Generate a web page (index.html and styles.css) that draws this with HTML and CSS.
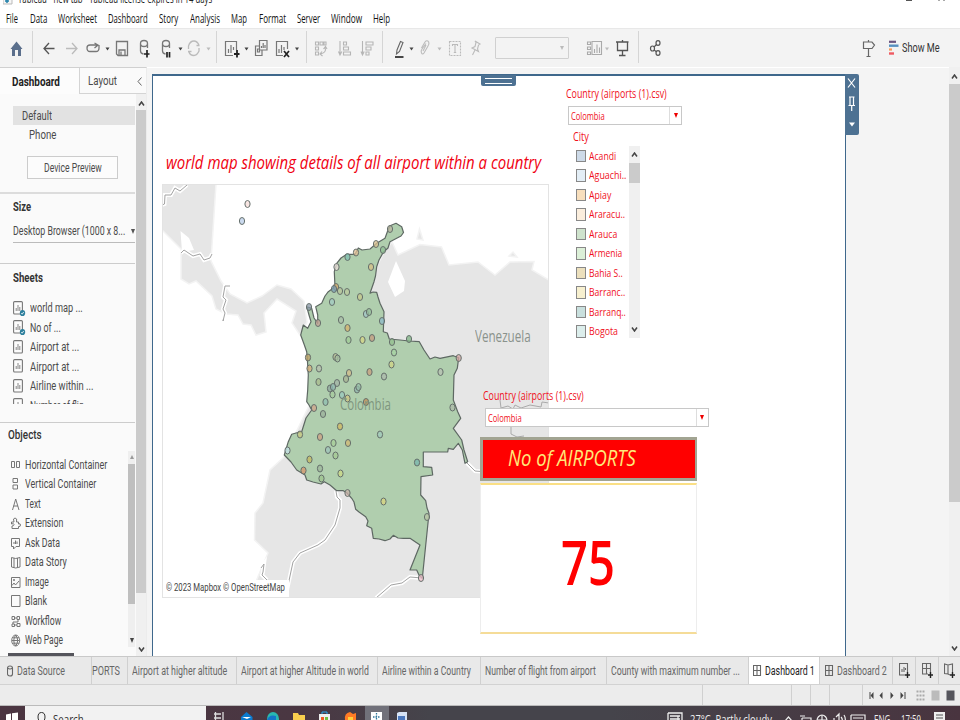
FILE: index.html
```html
<!DOCTYPE html>
<html lang="en">
<head>
<meta charset="utf-8">
<title>Tableau - new tab</title>
<link rel="stylesheet" href="styles.css">
</head>
<body>
<div class="app">
  <header class="titlebar">
    <div class="title-left"><svg class="logo" width="10" height="5" viewBox="0 0 10 5"><path d="M0 0V4H9V0" fill="#f6f6f6" stroke="#bbb"/><path d="M4 0v3M2 1h4" stroke="#1f7fa8" stroke-width="1.4"/></svg><span class="fit title-text" data-w="194">Tableau - new tab - Tableau license expires in 14 days</span></div>
    <svg class="winbtns" width="50" height="3" viewBox="0 0 50 3"><path d="M0 .5h6M33 0v1M38 0v1" stroke="#555"/></svg>
  </header>
  <nav class="menubar">
    <span class="m m1"><span class="fit" data-w="12">File</span></span><span class="m m2"><span class="fit" data-w="17">Data</span></span><span class="m m3"><span class="fit" data-w="39">Worksheet</span></span><span class="m m4"><span class="fit" data-w="40">Dashboard</span></span><span class="m m5"><span class="fit" data-w="19">Story</span></span><span class="m m6"><span class="fit" data-w="30">Analysis</span></span><span class="m m7"><span class="fit" data-w="16">Map</span></span><span class="m m8"><span class="fit" data-w="27">Format</span></span><span class="m m9"><span class="fit" data-w="23">Server</span></span><span class="m m10"><span class="fit" data-w="31">Window</span></span><span class="m"><span class="fit" data-w="17">Help</span></span>
  </nav>
  <div class="toolbar">
    <svg class="sec" width="33" height="39" viewBox="0 28 33 39"><path d="M10.500 49L16.500 41.500L22.500 49H21V56H18V50H15V56H12V49Z" fill="#5b6f8c"/></svg>
    <svg class="sec" width="184" height="39" viewBox="33 28 184 39"><g fill="none" stroke="#555" stroke-width="1.300">
      <path d="M54.500 48.500H44M49 43L44 48.500L49 54"/><path d="M66 48.500H77M72 43L77 48.500L72 54" stroke="#bbb"/>
      <path d="M97 45H90Q87 45 87 48Q87 51.500 90 51.500H96Q99 51.500 99 48V45M94.500 43L98 45L94.500 48" stroke="#777"/>
      <path d="M116.500 41.500H127.500V55.500H118L116.500 54ZM119 55V50H125V55M121 51.500V55" stroke="#777"/>
      <g stroke="#777"><path id="cyl" d="M140.500 43.500Q140.500 40.500 144 40.500T147.500 43.500V48M140.500 43.500Q140.500 46.500 144 46.500T147.500 43.500M140.500 43.500V51Q140.500 53.500 143.500 54"/><use href="#cyl" x="22"/></g>
      <path d="M144 54H149.500M147 50V57.500M167 52V57.500M169.500 52V57.500" stroke="#222" stroke-width="1.700"/>
      <path d="M188.500 49V46Q190 41 194 41Q197 41 199 45M196.500 45.500H199.500M199 48V51Q197 55.500 194 55.500Q190 55.500 189 52M191.500 51.500H188" stroke="#bbb"/></g>
      <path d="M105.500 47.500h4l-2 3zM178.500 47.500h4l-2 3z" fill="#444"/><path d="M206.500 47.500h4l-2 3z" fill="#bbb"/></svg>
    <svg class="sec" width="90" height="39" viewBox="217 28 90 39"><g fill="none" stroke="#777" stroke-width="1.200">
      <path d="M233 55.500H225.500V41.500H236.500V50M228.500 53V49M231 53V45M233.500 50V47"/><path d="M234 54H239.500M237 50V57.500" stroke="#222" stroke-width="1.800"/>
      <path d="M259.500 40.500H267V50H259.500ZM261.500 48V46M263.200 48V43M265 48V45M259 46H255.500V55.500H262V50.500M257.500 49h2v3h-2z"/>
      <path d="M283 55.500H276.500V41.500H287.500V49M279 53V49M281.500 53V45M284 50V47"/><path d="M284 51L289 57M289 51L284 57" stroke="#222" stroke-width="1.700"/></g><path d="M244.500 47.500h4l-2 3zM295 47.500h4l-2 3z" fill="#444"/></svg>
    <svg class="sec" width="76" height="39" viewBox="307 28 76 39"><g fill="none" stroke="#b5b5b5" stroke-width="1.100"><path d="M315.500 42h3v3h-3zM320 42h3v3h-3zM324 42h2v3h-2zM315.500 47h3v3h-3zM315.500 52h3v3h-3zM325 47Q327 53 320 54M322 51.500L320 54L322.500 56M323.500 49L325.500 46.500L327 49"/><path d="M340 41V54M338.500 51.500L340 55L341.800 51.500M343.500 42h3v3h-3zM343.500 47h5v3h-5zM343.500 52h7v3h-7z"/><path d="M362.500 41V54M361 51.500L362.500 55L364.200 51.500M366 42h7v3h-7zM366 47h5v3h-5zM366 52h3v3h-3z"/></g></svg>
    <svg class="sec sec-pen" width="112" height="39" viewBox="383 28 112 39"><g fill="none" stroke="#bbb" stroke-width="1.100"><path d="M397 50L400.500 41.500L403 42.500L399.500 51.500L396.500 54Z" stroke="#666"/><path d="M395 57H403.500" stroke="#333" stroke-width="1.800"/><path d="M421.500 48L425 42Q427 39.500 428.700 42Q429.500 44 428 46L424 53Q422.500 55 421.500 53Q420.500 51 422 49L426 43.500M426 45L423 51"/><path d="M449.500 41.500H460.500V55.500H449.500Z" stroke-dasharray="2 1"/><path d="M452.500 46V44.500H457.500V46M455 44.500V52.500M453.800 52.500H456.200"/><path d="M475 41L480 44L478.500 45L477.500 49L478.500 51.500L472 48L475 46.500L476 42.500ZM475 50L472.500 55"/></g><path d="M409.500 47.500h4l-2 3z" fill="#444"/><path d="M437.500 47.500h4l-2 3z" fill="#bbb"/></svg>
    <div class="combo"><i class="caret"></i></div>
    <svg class="sec" width="61" height="39" viewBox="578 28 61 39"><g fill="none" stroke="#aaa" stroke-width="1.100"><path d="M592 41.500H601.500V54.500H592ZM594.500 53V49M597 53V44.500M599.500 53V47.500M587.500 42h3v2.500h-3zM587.500 47h3v2.500h-3zM587.500 52h3v2.500h-3z"/><path d="M616 42H628.500M617.500 42V50.500H627.500V42M622.500 40V42M622.500 50.500V55.500M619 55.500H625.500" stroke="#555" stroke-width="1.300"/></g><path d="M605 47.500h4l-2 3z" fill="#bbb"/></svg>
    <svg class="sec last" width="30" height="39" viewBox="639 28 30 39"><g fill="none" stroke="#555" stroke-width="1.200"><ellipse cx="652.500" cy="48.500" rx="2" ry="2.500"/><ellipse cx="658" cy="43" rx="2" ry="2.300"/><ellipse cx="658" cy="53" rx="2" ry="2.300"/><path d="M654 47L656.500 44.500M654 50L656.500 51.800"/></g></svg>
    <div class="showme"><svg width="40" height="20" viewBox="858 38 40 20"><path d="M862.500 42H871L873.500 45L871 48.500H862.500ZM867.500 40V42M867.500 48.500V56.500M865.500 56.500H869.500" fill="none" stroke="#666" stroke-width="1.200"/><path d="M888 41.800H895" stroke="#6b5580" stroke-width="2.200"/><path d="M888 45.700H897.500" stroke="#5790c0" stroke-width="2.400"/><path d="M888 49.500H891" stroke="#f59a5a" stroke-width="2.200"/><path d="M888 53.500H893" stroke="#ee5a62" stroke-width="2.400"/></svg><span class="fit" data-w="38">Show Me</span></div>
  </div>

  <main class="main">
    <aside class="side">
      <div class="side-tabs"><div class="stab on"><span class="fit" data-w="48">Dashboard</span></div><div class="stab"><span class="fit" data-w="29">Layout</span><svg width="5" height="9" viewBox="0 0 5 9"><path d="M4.500 .5L1 4.500L4.500 8.500" fill="none" stroke="#666"/></svg></div></div>
      <div class="side-body">
        <div class="side-content">
          <section class="devices">
            <div class="dev sel"><span class="fit" data-w="30">Default</span></div>
            <div class="dev ph"><span class="fit" data-w="27">Phone</span></div>
            <div class="btn"><span class="fit" data-w="58">Device Preview</span></div>
          </section>
          <section class="size"><h3><span class="fit" data-w="18">Size</span></h3><div class="select"><span class="fit" data-w="112">Desktop Browser (1000 x 8...</span><i class="caret"></i></div></section>
          <section class="sheets"><h3><span class="fit" data-w="30">Sheets</span></h3>
            <svg class="defs" width="0" height="0"><defs><g id="sheet"><rect x=".6" y=".6" width="8.800" height="12.400" rx="1" fill="#fcfcfc" stroke="#777" stroke-width="1.100"/><path d="M3.200 10V7M5 10V4M6.800 10V6" stroke="#888" stroke-width="1"/></g><g id="used"><use href="#sheet"/><ellipse cx="9.500" cy="12" rx="2.700" ry="3.100" fill="#2d7f9d"/><path d="M8.300 12L9.200 13.200L10.700 11" stroke="#fff" fill="none" stroke-width=".8"/></g></defs></svg>
            <ul>
              <li><svg width="14" height="16"><use href="#used"/></svg><span class="fit" data-w="53">world map ...</span></li>
              <li><svg width="14" height="16"><use href="#used"/></svg><span class="fit" data-w="31">No of ...</span></li>
              <li><svg width="14" height="16"><use href="#sheet"/></svg><span class="fit" data-w="49">Airport at ...</span></li>
              <li><svg width="14" height="16"><use href="#sheet"/></svg><span class="fit" data-w="49">Airport at ...</span></li>
              <li><svg width="14" height="16"><use href="#sheet"/></svg><span class="fit" data-w="63">Airline within ...</span></li>
              <li><svg width="14" height="16"><use href="#sheet"/></svg><span class="fit" data-w="60">Number of flig...</span></li>
            </ul></section>
          <section class="objects"><h3><span class="fit" data-w="34">Objects</span></h3>
            <div class="obj-wrap"><ul>
              <li><svg width="10" height="14"><path d="M.5 3.500h3v6h-3zM5.500 3.500h3v6h-3z"/></svg><span class="fit" data-w="82">Horizontal Container</span></li>
              <li><svg width="10" height="14"><path d="M2 1.500h4.500v4H2zM2 8h4.500v4H2z"/></svg><span class="fit" data-w="71">Vertical Container</span></li>
              <li><svg width="10" height="14"><path d="M1.500 13L4.700 2L8 13M2.500 9H7"/></svg><span class="fit" data-w="16">Text</span></li>
              <li><svg width="10" height="14"><path d="M.5 6H3Q1.500 2 4 2T5.500 6H7.500V8Q9.500 7 9.500 9T7.500 10.500V12.500H1V10Q3 10 3 8.500T.5 8Z"/></svg><span class="fit" data-w="38">Extension</span></li>
              <li><svg width="10" height="14"><path d="M.5 2.500h8v8H5L2.500 13V10.500H.5ZM3 8V6M4.500 8V4.500M6 8V5.500"/></svg><span class="fit" data-w="35">Ask Data</span></li>
              <li><svg width="10" height="14"><path d="M.5 2.500L4.700 3.500L9 2.500V12L4.700 13L.5 12ZM3 3V12.500M6.500 3V12.500"/></svg><span class="fit" data-w="42">Data Story</span></li>
              <li><svg width="10" height="14"><path d="M.5 2.500h8.500v10H.5ZM1 10.500L3 8L4.500 10L8 6M2.500 4.500h1v1h-1z"/></svg><span class="fit" data-w="24">Image</span></li>
              <li><svg width="10" height="14"><path d="M.5 1.500h8.500v11H.5Z"/></svg><span class="fit" data-w="22">Blank</span></li>
              <li><svg width="10" height="14"><path d="M1 2.500h2.500v3H1zM6 2.500h2.500v3H6zM3.500 4H6M1 10h2.500v2.500H1zM2 10V8h5V6M6 9.500h3v3H6zM3.500 11H6"/></svg><span class="fit" data-w="36">Workflow</span></li>
              <li><svg width="10" height="14"><path d="M4.700 2A4 5.500 0 1 1 4.700 13A4 5.500 0 1 1 4.700 2ZM4.700 2Q.8 7.500 4.700 13Q8.600 7.500 4.700 2M.8 7.500H8.600M1.500 4.800H8M1.500 10.200H8"/></svg><span class="fit" data-w="38">Web Page</span></li>
            </ul><div class="obj-scroll"><i class="up"></i><b></b><i class="dn"></i></div></div>
            <div class="hbar"></div>
          </section>
        </div>
        <div class="vscroll side-scroll"><svg width="7" height="5"><path d="M1 4.500L3.500 1L6 4.500"/></svg><b></b><svg width="7" height="5"><path d="M1 .5L3.500 4L6 .5"/></svg></div>
      </div>
    </aside>

    <div class="stage">
      <div class="board">
        <h1 class="bt"><span class="fit" data-w="375">world map showing details of all airport within a country</span></h1>
        <div class="map">
        <svg width="387" height="414" viewBox="162 184 387 414" preserveAspectRatio="none">
          <defs><ellipse id="d" rx="2.600" ry="3.500" stroke="#66706c" stroke-width="1" fill-opacity=".75"/></defs>
          <g fill="#e6e6e6" stroke="#f3f3f3" stroke-width="1.500">
            <path d="M162 184H216L211 261L221 281L230 294L247 303L262 296L277 285L291 289L304 301L307 322L300 335L292 323L296 311L277 299L264 313L266 332L256 335L251 325L243 324L238 315L226 314L216 309L212 296L196 281L189 284L181 279V249L162 230Z"/>
            <path d="M384 252L392 242L398 255L420 244.500L441.500 247L449 265L478 262L495 275L510 262L534 261.500L532 270L549 280V598H249L268 553L254.500 540L255 513L263 503L270 470L284 457Z"/>
            <path d="M417 239L419.500 229L423 240ZM509 256L513 252L517 257Z"/></g>
          <path d="M396 261L405 281L404 291L395 297L388 282ZM180.500 231L189 238L194 250L182 252Z" fill="#fff"/>
          <g fill="none" stroke="#fff" stroke-width="4"><path d="M162 205L164.500 204L165 195L171 195L175 188L180 191L187 185M181 253L184 250L193 256L200 254L204 260L210 258L212 254M230 286L225 286L223 297L226 300L223 309L225 313L223 321L223.500 319M336 491L337 497L340 500V508L335 525L325 540L318 545L300 553L293 562L290 576L287 590M422 578L410 577L402 583L391 585L383 592L376 598M261 568L264 564L263 572L262 575L267 580M467 463L475 471L487 472"/></g>
          <path fill="none" stroke="#a2a2a2" d="M162 205L164.500 204L165 195L171 195L175 188L180 191L187 185M181 253L184 250L193 256L200 254L204 260L210 258L212 254M230 286L225 286L223 297L226 300L223 309L225 313L223 321L223.500 319M336 491L337 497L340 500V508L335 525L325 540L318 545L300 553L293 562L290 576L287 590M422 578L410 577L402 583L391 585L383 592L376 598M261 568L264 564L263 572L262 575L267 580M467 463L475 471L487 472"/>
          <path d="M500 400L501 408L508 406L513 409L515 405L521 408L530 405L541 407L542 402L549 403M511 427V434L517 437L524 436" fill="none" stroke="#aaa"/>
          <path d="M385 238.300L388 230L390 225.700L396 223.300L401.700 226.700L403.500 232.500L401 236L396.700 238.300L390 241.700L388 248L383.300 252.300L379 260L376.700 266.700L375.500 276L374 281.700L370 293.300L373 292L376.700 292.300L378 297L380 303.300L384 311.700L383.300 331.700L387.300 333L389.300 339L400 340L409.300 341L419.300 341.700L424 350L430 359L435 357L440 358.300L453.300 355.700L458.700 357.700L457.300 368.300L454 375L453.300 400L457.700 411.700L460.700 418.300L453.300 428.300L461.700 440L464 450L467.700 461.700L465 463.300L462.300 450L458.300 443.300L453.300 449.300L448.300 448.300L447.700 452H423.300V466.700L431.700 467.300L432.700 475L421 476.700L420.700 495L425.700 500.700L427 508L429 513.300L422.300 578.300L419 575L416.700 570L410 570L414 560L420 545L410 538.300H403.300L398 538L393.300 535.300L390 539L385 540.700L379 539L373.300 538.300L371.700 528.300L366.700 525.700L368 521L365.700 516.700L359 512L355.700 509.300L354 502L351.700 498.300L347 493L343.300 490.700H336.700L330 485L324.300 481.700L321 484L313 482L306.700 480L305 475L296.700 470L291 462L284.300 455L288.300 441.700L291.700 434.300L296 433L301.700 431.700L306 418L311.700 410L309 405L306.700 401.700L307.700 390L308.300 375L307.500 362L306.700 351.700L304 344L300.700 335L303.300 325L307.700 328.300L311 321.700L309 315L306.700 306.700L311.700 308.300L314 318L317.700 323.300V315L315.700 306.700L321.700 303.300L325 296L328.300 291.700L335 286.700L334.300 271.700L336.700 263.300L341 258L346.700 254.300H355L358.300 248L362 250L370 249L376.700 243.300Z" fill="#b0ceae" stroke="#5e6863" stroke-width="1.200" stroke-linejoin="round"/>
          <g id="dots"></g>
        </svg>
        <span class="label co"><span class="fit" data-w="51">Colombia</span></span>
        <span class="label ve"><span class="fit" data-w="56">Venezuela</span></span>
        <span class="credit"><span class="fit" data-w="119">© 2023 Mapbox © OpenStreetMap</span></span>
        </div>
        <div class="filter f1"><h4><span class="fit" data-w="101">Country (airports (1).csv)</span></h4><div class="dd"><span class="fit" data-w="34">Colombia</span><i></i></div></div>
        <div class="legend"><h4><span class="fit" data-w="16">City</span></h4>
          <div class="lwrap"><ul>
            <li><i class="c1"></i><span class="fit" data-w="27">Acandi</span></li>
            <li><i class="c2"></i><span class="fit" data-w="37">Aguachi..</span></li>
            <li><i class="c3"></i><span class="fit" data-w="22">Apiay</span></li>
            <li><i class="c4"></i><span class="fit" data-w="36">Araracu..</span></li>
            <li><i class="c5"></i><span class="fit" data-w="28">Arauca</span></li>
            <li><i class="c6"></i><span class="fit" data-w="33">Armenia</span></li>
            <li><i class="c7"></i><span class="fit" data-w="34">Bahia S..</span></li>
            <li><i class="c8"></i><span class="fit" data-w="36">Barranc..</span></li>
            <li><i class="c9"></i><span class="fit" data-w="37">Barranq..</span></li>
            <li><i class="c10"></i><span class="fit" data-w="29">Bogota</span></li>
          </ul><div class="vscroll lscroll"><svg width="7" height="5"><path d="M1 4.500L3.500 1L6 4.500"/></svg><b></b><svg width="7" height="5"><path d="M1 .5L3.500 4L6 .5"/></svg></div></div>
        </div>
        <div class="filter f2"><h4><span class="fit" data-w="101">Country (airports (1).csv)</span></h4><div class="dd"><span class="fit" data-w="34">Colombia</span><i></i></div></div>
        <div class="kpi"><div class="kpi-title"><span class="fit" data-w="128">No of AIRPORTS</span></div><div class="kpi-value"><span class="fit" data-w="54">75</span></div></div>
        <div class="grip"></div>
        <div class="handle"><svg width="13" height="60" viewBox="0 0 13 60"><path d="M3 4.500L10 13.500M10 4.500L3 13.500M4 23H9.500M5 23V31M8.500 23V31M3.500 31.500H10M6.700 31.500V37" fill="none" stroke="#fff" stroke-width="1.200"/><path d="M4 48.500h6l-3 4z" fill="#fff"/></svg></div>
      </div>
    </div>
    <div class="vscroll page-scroll"><svg width="7" height="5"><path d="M1 4.500L3.500 1L6 4.500"/></svg><b></b><svg width="7" height="5"><path d="M1 .5L3.500 4L6 .5"/></svg></div>
  </main>

  <footer class="tabs">
    <div class="tab t1"><svg width="7" height="12"><path d="M.5 3Q.5 1 3 1T5.500 3V9Q5.500 11 3 11T.5 9ZM.5 3Q3 5 5.500 3"/></svg><span class="fit" data-w="48">Data Source</span></div>
    <div class="tab t2"><span class="fit" data-w="28">PORTS</span></div>
    <div class="tab t3"><span class="fit" data-w="95">Airport at higher altitude</span></div>
    <div class="tab t4"><span class="fit" data-w="128">Airport at higher Altitude in world</span></div>
    <div class="tab t5"><span class="fit" data-w="89">Airline within a Country</span></div>
    <div class="tab t6"><span class="fit" data-w="111">Number of flight from airport</span></div>
    <div class="tab t7"><span class="fit" data-w="129">County with maximum number ...</span></div>
    <div class="tab t8"><svg width="9" height="11"><path d="M.5 .5h7v10h-7zM4 .5v10M.5 5.500h7"/></svg><span class="fit" data-w="50">Dashboard 1</span></div>
    <div class="tab t9"><svg width="9" height="11"><path d="M.5 .5h7v10h-7zM4 .5v10M.5 5.500h7"/></svg><span class="fit" data-w="50">Dashboard 2</span></div>
    <div class="tab t10"><svg width="12" height="15"><path d="M6 12H.5V.5H8.500V9M3 9V6M5 9V4M6.500 7V5"/><path class="plus" d="M6 12h5M8.500 9v6"/></svg></div>
    <div class="tab t10"><svg width="12" height="15"><path d="M6 11H.5V.5H8.500V9M4.500 .5V11M.5 5.500H8.500"/><path class="plus" d="M6 12h5M8.500 9v6"/></svg></div>
    <div class="tab t11"><svg width="12" height="15"><path d="M6 12L4 11L.5 10.500V1L4 2L8.500 1V9M4 2V11"/><path class="plus" d="M6 12h5M8.500 9v6"/></svg></div>
  </footer>
  <div class="status"><i class="s1"></i><i class="s2"></i><i class="s3"></i><i class="s4"></i><i class="s5"></i>
    <svg width="97" height="20" viewBox="864.500 685 97 20"><path d="M871.500 692v7" stroke="#444"/><path d="M875 692v7l-3-3.500zM884 692v7l-3-3.500zM892 692v7l3-3.500zM902 692v7l3-3.500z" fill="#444"/><path d="M906.500 692v7" stroke="#444"/><path d="M918 691.500h8M918 695.500h8M918 699.500h8" stroke="#aaa" stroke-width="2" stroke-dasharray="2 1"/><path d="M933 690.500h8v10h-8z" fill="#bbb"/><path d="M948 690.500h8v10h-8z" fill="#55555c"/></svg></div>
  <div class="taskbar">
    <svg width="25" height="14" viewBox="0 0 25 14"><path d="M6 8.500L11 7.500V14H6zM12 7.300L18 6.500V14H12z" fill="#fff"/></svg>
    <div class="search"><svg width="10" height="14"><ellipse cx="4.500" cy="11" rx="3.500" ry="4.500" fill="none" stroke="#333"/></svg><span class="fit" data-w="31">Search</span></div>
    <svg width="204" height="14" viewBox="206 706 204 14"><path d="M365 706h24v14h-24z" fill="#71717a"/><path d="M214 714h7M214 718h7M215.500 712v8M223 712v8" stroke="#ddd" stroke-width="1.300"/><path d="M241 717L246.500 712L252.500 717V720H241z" fill="#0b7bd0"/><path d="M242 717h9l-4 2z" fill="#fff"/><ellipse cx="273" cy="719" rx="6" ry="7" fill="#29b8b1"/><path d="M267 720Q269 714 276 716V720" fill="#1476c9"/><path d="M293 713h5l1 2h6v5h-12z" fill="#f9cf4e"/><path d="M319 714h11v6h-11z" fill="#eee"/><path d="M322 714v-2h5v2" stroke="#25a3e8" fill="none"/><path d="M321 717h3v3h-3z" fill="#f15a24"/><path d="M325 717h3v3h-3z" fill="#6fbf42"/><path d="M345 720Q344 713 350 712L353 714L356 713V720z" fill="#ff7b25"/><path d="M348 717h5v3h-5z" fill="#ffd03c"/><path d="M371 712h11v8h-11z" fill="#fff"/><path d="M376.500 713v7M373 717h7" stroke="#31789c" stroke-width="1.300" stroke-dasharray="1.500 1"/><path d="M399 712h8v8h-10v-7z" fill="#d6e2f4"/><path d="M398 716h7v4h-7z" fill="#4c78bd"/></svg>
    <div class="tray"><svg width="17" height="10" viewBox="0 0 17 10"><path d="M1 1h14v9M1 1v9M3 4h10M3 7h10M11 4v6" stroke="#eee" fill="none" stroke-width="1.300"/></svg><span class="fit wt" data-w="82">27°C&nbsp; Partly cloudy</span>
      <svg class="ti" width="84" height="10" viewBox="784 710 84 10"><g fill="none" stroke="#eee" stroke-width="1.200"><path d="M785 719L788.500 715L792 719M800 714h5M802 716h9v5M802 720v-4"/><ellipse cx="822" cy="719" rx="5" ry="6"/><path d="M822 713v7M817 718h10M834 716v4M836 715L839 712v8M841 715q2 2 1 5M844 713q2 3 1 7M851 713h14v7M851 713v7M853 716h10"/></g></svg><span class="fit lang" data-w="16">ENG</span><span class="fit time" data-w="20">17:59</span><svg width="12" height="9"><path d="M0 0h11v9H0z" fill="#eee"/><path d="M2 3h7M2 6h7" stroke="#555"/></svg></div>
  </div>
</div>
<script src="app.js"></script>
</body>
</html>
```
FILE: styles.css
```css
*{box-sizing:border-box}
html,body{margin:0;padding:0}
body{width:960px;height:720px;overflow:hidden;background:#fff;font:12.5px/16px "Open Sans","Noto Sans",sans-serif;color:#333}
h1,h3,h4,ul{margin:0;padding:0;font-weight:400}
ul{list-style:none}
svg{display:block;flex:none}
.app{width:960px;height:720px;display:flex;flex-direction:column;overflow:hidden}
.fit{display:inline-block;white-space:nowrap;transform-origin:0 50%;flex:none}
.titlebar{height:10px;flex:none;display:flex;justify-content:space-between;overflow:hidden}
.title-left{display:flex;padding-left:3px;height:10px}
.title-text{margin-left:5px;margin-top:-9.5px;line-height:16px;font-size:12px;color:#222}
.winbtns{margin-right:4px}
.menubar{height:18px;flex:none;display:flex;align-items:center;padding-left:6px;color:#111}
.m{display:flex}
.m1{width:24px}.m2{width:28px}.m3{width:50px}.m4{width:51px}.m5{width:31px}.m6{width:41px}.m7{width:28px}.m8{width:38px}.m9{width:34px}.m10{width:42px}
.toolbar{height:39px;flex:none;background:#f3f3f3;border-top:1px solid #e8e8e8;display:flex;align-items:center}
.sec{background:linear-gradient(#d5d5d5,#d5d5d5) right 50%/1px 32px no-repeat;margin-top:-2px}
.sec-pen,.last{background:none}
.combo{width:74px;height:22px;border:1px solid #d0d0d0;border-radius:1px;margin-right:9px;display:flex;align-items:center;justify-content:flex-end;padding-right:4px;flex:none}
.caret{border:2px solid transparent;border-top:4px solid #555;border-bottom:0}
.combo .caret{border-top-color:#bbb}
.showme{margin-left:auto;display:flex;align-items:center;padding-right:20px;font-family:Roboto,sans-serif;font-size:13px}
.showme svg{margin-left:-1px}
.showme .fit{margin-left:3px}
.main{height:589px;flex:none;display:flex;background:#f4f4f4}
.side{width:147px;display:flex;flex-direction:column;background:#fafafa;font-family:Roboto,"Open Sans",sans-serif;color:#4b4b4b;border-top:1px solid #d0d0d0;border-right:1px solid #ececec}
.side-tabs{height:26px;flex:none;display:flex}
.stab{width:67px;border:1px solid #d4d4d4;border-top:0;border-right:0;display:flex;align-items:center;justify-content:space-between;padding:1px 4px 0 8px;font-size:13px}
.stab.on{width:80px;border:0;padding-left:12px;font-weight:700;color:#222;background:#fcfcfc}
.side-body{flex:1;display:flex;min-height:0}
.side-content{width:135px;flex:none;display:flex;flex-direction:column}
.devices{height:100px;padding:12px 0 0 13px;border-bottom:2px solid #dcdcdc}
.dev{height:19px;display:flex;align-items:center;padding-left:9px}
.dev.sel{background:#e2e2e2}
.dev.ph{padding-left:16px;height:20px}
.btn{margin:11px 0 0 14px;width:91px;height:23px;border:1px solid #ccc;display:flex;align-items:center;justify-content:center;background:#fcfcfc}
.size{height:70px;padding:5px 0 0 13px;border-bottom:1px solid #ccc}
h3{font-weight:700;color:#333;height:17px;display:flex;align-items:center;font-size:12.5px}
.select{height:26px;margin-top:1px;padding:4px 0 0;border-bottom:1px solid #bbb;display:flex;align-items:center;justify-content:space-between}
.select .caret{border-width:5px 2.5px 0;border-top-color:#555}
.sheets{height:160px;padding:6px 0 0 13px;border-bottom:1px solid #ccc}
.defs{position:absolute}
.sheets ul{margin-top:12px;height:105px;overflow:hidden}
.sheets li{height:19.5px;display:flex;align-items:center}
.sheets li svg{margin-right:3px;margin-top:1px}
.objects{flex:1;padding-top:3px;display:flex;flex-direction:column}
.objects h3{padding-left:8px;font-weight:500;height:18px}
.obj-wrap{margin-top:7px;display:flex;justify-content:space-between}
.obj-wrap ul{padding:4px 0 0 11px}
.obj-wrap li{height:19.5px;display:flex;align-items:center}
.obj-wrap li svg{margin-right:4px;fill:none;stroke:#777;stroke-width:1}
.obj-scroll{width:7px;height:196px;background:#efefef;display:flex;flex-direction:column;align-items:center;padding:4px 0}
.obj-scroll b{width:7px;height:140px;background:#bfbfbf;margin-top:5px}
.obj-scroll .up{border:2.500px solid transparent;border-bottom:4px solid #999;border-top:0}
.obj-scroll .dn{border:2.500px solid transparent;border-top:5px solid #444;border-bottom:0;margin-top:auto}
.hbar{margin:3px 0 0 8px;height:3px;width:66px;background:#55555c}
.vscroll{display:flex;flex-direction:column;align-items:center;background:#f0f0f0;flex:none}
.vscroll svg{fill:none;stroke:#444;stroke-width:1.500}
.vscroll b{width:100%;background:#cbcbcb}
.side-scroll{width:10px;margin-left:1px;padding:7px 0 4px}
.side-scroll b{height:483px;margin-top:4px}
.side-scroll svg:last-child,.page-scroll svg:last-child{margin-top:auto}
.stage{flex:1;padding:6px 0 0 5px;border-top:1px solid #fff;overflow:hidden;background:#f4f4f4}
.board{position:relative;width:694px;height:590px;background:#fff;border:2px solid #3f688c;border-right-width:1.500px;border-left-width:1.500px}
.bt,.map,.filter,.legend,.kpi,.grip,.handle{position:absolute}
.bt{left:13px;top:75px;font-size:17.5px;line-height:22px;font-style:italic;font-weight:500;color:#f00010;display:flex}
.map{left:9px;top:108px;width:387px;height:414px}
.map::after{content:"";position:absolute;left:0;top:0;right:0;bottom:0;border:1px solid #e3e3e3}
.label{position:absolute;display:flex;color:#8a928c;font-size:16px;line-height:20px}
.co{left:178px;top:210px;color:#7f967e}
.ve{left:313px;top:142px}
.credit{position:absolute;left:1px;bottom:1px;width:126px;height:17px;background:#fff;padding-left:3px;font:11px/16px Roboto,sans-serif;color:#444;display:flex}
.filter,.legend{color:#f0101c}
h4{font-size:12px;line-height:16px;display:flex}
.f1{left:413px;top:10px;width:118px}
.f1 .dd{margin:4px 0 0 2px;width:114px}
.dd{height:19px;border:1px solid #c8c8c8;background:#fff;display:flex;align-items:center;justify-content:space-between;padding-left:2px;font-size:10.5px}
.dd i{height:17px;width:12px;border-left:1px solid #ddd;display:flex;align-items:center;justify-content:center}
.dd i::after{content:"";border:2.500px solid transparent;border-top:5px solid #e00;border-bottom:0}
.legend{left:420px;top:53px;width:70px}
.lwrap{display:flex;justify-content:space-between;margin-top:1px;width:67px}
.legend li{height:19.500px;display:flex;align-items:center;font-size:11.500px;padding-left:3px}
.legend li i{width:10px;height:12.500px;border:1px solid #888;margin-right:3px}
.c1{background:#cddae8}.c2{background:#e3eef6}.c3{background:#f8dfbd}.c4{background:#fbeedd}.c5{background:#cfe3cd}.c6{background:#dcf0d8}.c7{background:#ece0bd}.c8{background:#f7f0cf}.c9{background:#c9e0de}.c10{background:#dceeec}
.lscroll{width:11px;height:192px;padding:6px 0 6px}
.lscroll b{height:20px;margin-top:6px}
.lscroll svg:last-child{margin-top:auto}
.f2{left:330px;top:312px;width:228px}
.f2 .dd{margin:4px 0 0 1.500px;width:224px}
.kpi{left:327px;top:361px;width:217px}
.kpi-title{height:44px;background:#f00;border:3px solid #a2a492;border-right-width:2.500px;display:flex;align-items:center;padding-left:25px;color:#ffe97a;font-size:22.500px;line-height:26px;font-style:italic;font-weight:500;padding-bottom:2px}
.kpi-value{margin-top:2px;height:151px;background:#fff;border:1px solid #ededed;border-top:2px solid #fadf85;border-bottom:2px solid #f5dc98;display:flex;align-items:center;padding:4px 0 0 80px;color:#f00;font-size:62px;line-height:70px;font-weight:600}
.grip{left:328px;top:-1px;width:35px;height:11px;background:#4d7192;border-radius:0 0 2px 2px}
.grip::after{content:"";position:absolute;left:4px;right:4px;top:3px;height:4px;border:1px solid #fff;border-width:1px 0}
.handle{left:692px;top:-2px;width:14px;height:61px;background:#4d7192;border-radius:0 2px 2px 0}
.page-scroll{width:11px;padding:7px 0 5px}
.page-scroll b{height:418px;margin-top:5px}
.tabs{height:29px;flex:none;background:#e9e9e9;border-top:1px solid #c9c9c9;border-bottom:1px solid #d2d2d2;display:flex;font-family:Roboto,sans-serif;font-size:12px;color:#666}
.tab{display:flex;align-items:center;border-right:1px solid #d0d0d0;padding-left:4px;flex:none}
.tab svg{fill:none;stroke:#666;stroke-width:1.100;margin-right:3px}
.tab .plus{stroke:#222;stroke-width:1.400}
.t1{width:92px;padding-left:7px}.t2{width:36px;padding-left:0}.t3{width:109px}.t4{width:141px}.t5{width:103px}.t6{width:126px}.t7{width:142px}
.t8{width:71px;background:#fff;color:#222}.t9{width:73px;padding-left:5px}
.t10{width:23px;padding-left:6px}.t11{width:21px;padding-left:5px;border:0}
.status{height:21px;flex:none;background:#ececec;display:flex;border-bottom:1px solid #bbb}
.status i{border-right:1px solid #d0d0d0}
.s1{width:703px}.s2{width:89px}.s3{width:19px}.s4{width:19px}.s5{width:33px}
.taskbar{height:14px;flex:none;display:flex;overflow:hidden;background:linear-gradient(90deg,#4b3541 0,#4a3742 300px,#45444b 430px,#45444b 610px,#49343f 100%)}
.search{width:181px;height:14px;background:#f2f2f2;display:flex;padding-left:12px}
.search svg{margin-right:6px}
.search .fit{margin-top:6px}
.tray{margin-left:auto;margin-right:14px;display:flex;color:#eee;padding-top:6px;height:14px;font-size:12.5px;line-height:15px}
.wt{margin-left:6px}.ti{margin-left:12px}.lang{margin-left:6px}.time{margin-left:11px}
.tray>svg:last-child{margin-left:13px}
.tray .fit{margin-top:0}
```
FILE: app.js
```js
// Squeeze each label to the width of its slot.
function fitLabels() {
  document.querySelectorAll('.fit').forEach(function (el) {
    var want = Number(el.dataset.w);
    var natural = el.offsetWidth;
    el.style.transform = 'scaleX(' + want / natural + ')';
    el.style.marginRight = (want - natural) + 'px';
  });
}

// Airports: x, y, fill
var airports = [
  [247.500,204,'#f5dcd8'],[242,221,'#b9cdea'],[390,229,'#b9b5a0'],[376,244,'#d9c08f'],[356,252.500,'#e2bd94'],[383,250,'#8fbf93'],
  [347.500,257,'#7fbdb0'],[336.500,267,'#eadcd8'],[371,267,'#d8c087'],[336,287,'#d8a868'],[334,289,'#7b9fb5'],[340,291,'#b8c49a'],[347,292,'#bcc99c'],
  [332,302,'#a3cbc3'],[360,297,'#c7c88b'],[309,307,'#8795a5'],[318,323,'#c5a196'],[341,320,'#aabda7'],[347.500,328,'#d5b169'],[348.500,340,'#a0cb95'],
  [366,314,'#a3c5c8'],[369,312,'#95bd9b'],[382,321,'#8db9c8'],[362.500,340,'#d6d584'],[372,338,'#c79b7f'],[392,342,'#93bf8d'],[409,339,'#7eb383'],
  [394,352.500,'#a6d3a2'],[391.500,364.500,'#d0d484'],[369.500,372,'#ca9d7c'],[384,376.500,'#acb8ab'],[440.500,372,'#b8c1b3'],[458.700,358,'#d1a4a1'],
  [308,357.500,'#bea064'],[309.500,368.500,'#d8ae79'],[319,368.500,'#b7bfae'],[335.500,357,'#b9bd93'],[337.500,358.500,'#a6bfa0'],[349,373,'#d3bc89'],[346,379,'#a8b392'],[318.500,382,'#a9bb8c'],
  [337,383,'#a3b3a6'],[330,388.500,'#8fa79e'],[333,387,'#8fb5b0'],[332.500,394.500,'#a5c99c'],[342,395,'#9ac8bd'],[347.500,398.500,'#cfc480'],[357,389.500,'#91b5af'],[358.500,387,'#95bda8'],[366,402,'#c58f55'],
  [325.500,402,'#8fbeb0'],[314,408,'#d3a389'],[323,414,'#9bb09b'],[452.500,407.500,'#aebaa8'],[340,426.500,'#d2b85e'],[300,434.500,'#cbc880'],[320,437,'#cf9f82'],[333.500,443,'#a8cd98'],[348,443,'#d2b873'],
  [380,434.500,'#a1cabc'],[328,450,'#9fc3bb'],[335.500,455.500,'#a4ca92'],[287.500,450.500,'#c5e2e8'],[309.500,459.500,'#c5b85d'],[303.500,470.500,'#d8956b'],[320,468.500,'#9eb69b'],[417,462.500,'#77b4ac'],
  [321.500,478.500,'#9fc38e'],[340.500,473.500,'#ceda86'],[347.500,493,'#c9b1aa'],[383.500,501.500,'#d9d47d'],[427,517,'#b9c4a6'],[421,578,'#edbdc9']
];

function drawAirports() {
  var layer = document.getElementById('dots');
  airports.forEach(function (a) {
    var u = document.createElementNS('http://www.w3.org/2000/svg', 'use');
    u.setAttribute('href', '#d');
    u.setAttribute('x', a[0]);
    u.setAttribute('y', a[1]);
    u.setAttribute('fill', a[2]);
    layer.appendChild(u);
  });
}

fitLabels();
drawAirports();
```
